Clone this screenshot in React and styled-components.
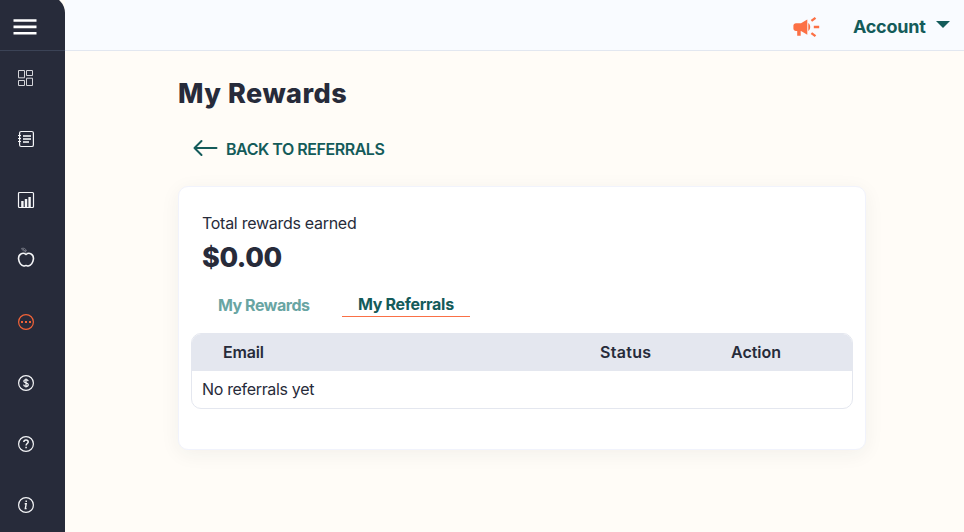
import styled, { createGlobalStyle } from "styled-components";

const GlobalStyle = createGlobalStyle`
  * {
    box-sizing: border-box;
  }

  body {
    margin: 0;
    background: #fffcf7;
    color: #272b3a;
    font-family: Inter, "Liberation Sans", sans-serif;
  }
`;

const Layout = styled.div`
  display: flex;
  height: 532px;
  overflow: hidden;
`;

const Sidebar = styled.nav`
  width: 65px;
  height: 536px;
  margin-top: -4px;
  padding-top: 4px;
  flex-shrink: 0;
  background: #272b3a;
  border-top-right-radius: 17px;
`;

const MenuButton = styled.div`
  height: 51px;
  padding: 18px 0 0 13px;
  border-bottom: 1px solid #3b4356;
`;

const NavItem = styled.div`
  height: 61px;
  padding: ${(props) => props.$top || 17}px 0 0 16px;
  color: ${(props) => (props.$active ? "#f26338" : "#f4f5f7")};

  svg {
    display: block;
  }
`;

const Main = styled.div`
  flex: 1;
`;

const Header = styled.header`
  display: flex;
  height: 51px;
  padding: 0 14px 0 728px;
  background: #f9fbff;
  border-bottom: 1px solid #e2e7f0;
`;

const Megaphone = styled.svg`
  margin-top: 16px;
  flex-shrink: 0;
`;

const Account = styled.div`
  display: flex;
  margin-left: 33px;
  padding-top: 16px;
  color: #145b5a;

  svg {
    margin: 5px 0 0 10px;
  }
`;

const Text = styled.span`
  display: block;
  font-size: ${(props) => props.$size || 16}px;
  font-weight: ${(props) => props.$weight || 400};
  line-height: ${(props) => props.$line || 22}px;
  letter-spacing: ${(props) => props.$spacing || 0}px;
  white-space: nowrap;
`;

const Content = styled.main`
  width: 687px;
  margin: 26px 0 0 113px;
`;

const Title = styled(Text)`
  margin: 0;
`;

const Amount = styled(Text)`
  margin-top: 7px;
`;

const BackLink = styled.a`
  display: flex;
  height: 22px;
  margin-top: 27px;
  padding-left: 15px;
  color: #145b5a;

  svg {
    margin: 1px 8px 0 0;
  }
`;

const Card = styled.section`
  width: 688px;
  height: 264px;
  margin-top: 26px;
  padding: 25px 12px 0 12px;
  background: #fff;
  border: 1px solid #f1f3fc;
  border-radius: 10px;
  box-shadow: 0 4px 20px rgba(39, 43, 58, 0.06);
`;

const Summary = styled.div`
  padding-left: 11px;
`;

const Tabs = styled.div`
  display: flex;
  height: 26px;
  margin-top: 17px;
`;

const Tab = styled.div`
  width: ${(props) => (props.$active ? 128 : 151)}px;
  height: ${(props) => (props.$active ? 25 : 26)}px;
  padding: ${(props) => (props.$active ? "1px 0 0 16px" : "2px 0 0 27px")};
  color: ${(props) => (props.$active ? "#145b5a" : "#69a5a3")};
  border-bottom: ${(props) => (props.$active ? "1px solid #fa7046" : "none")};
`;

const Table = styled.div`
  width: 662px;
  height: 76px;
  margin-top: 15px;
  border: 1px solid #e4e7ef;
  border-radius: 10px;
  overflow: hidden;
`;

const TableHead = styled.div`
  display: grid;
  grid-template-columns: 377px 131px 1fr;
  height: 37px;
  padding: 7px 0 0 31px;
  background: #e4e7ef;
`;

const TableRow = styled.div`
  padding: 7px 0 0 10px;
`;

const MenuIcon = () => (
  <svg width="24" height="18" viewBox="0 0 24 18" fill="#fff">
    <path d="M.5 1.2h23v2.6H.5zM.5 7.6h23v2.6H.5zM.5 14h23v2.6H.5z" />
  </svg>
);

const Icon = ({ children, height = 20 }) => (
  <svg
    width="20"
    height={height}
    viewBox={`0 0 20 ${height}`}
    fill="none"
    stroke="currentColor"
    strokeWidth="1.2"
  >
    {children}
  </svg>
);

const GridIcon = () => (
  <Icon>
    <path
      strokeWidth="1"
      stroke="#d4d5d9"
      d="M2.5 2.5h6v7.3h-6zM10.5 2.5h6v5h-6zM2.5 12.5h6v5h-6zM10.5 10.2h6v7.3h-6z"
    />
  </Icon>
);

const JournalIcon = () => (
  <Icon>
    <path d="M3.6 5V4c0-1 .6-1.5 1.6-1.5h10.5c1.1 0 1.7.6 1.7 1.6v11.8c0 1-.6 1.6-1.7 1.6H5.2c-1 0-1.6-.5-1.6-1.5v-1M3.6 5v10M2 6.5h3M2 9.5h3M2 12.5h3" />
    <path strokeWidth="2" stroke="#c9cbd0" d="M7 7h8M7 10h8M7 13h6" />
  </Icon>
);

const ChartIcon = () => (
  <Icon>
    <rect x="2.5" y="2.5" width="15" height="15" rx="1" />
    <path strokeWidth="2.4" d="M6.4 17v-6M10 17V9M13.6 17V7" />
  </Icon>
);

const AppleIcon = () => (
  <Icon height={24}>
    <path
      strokeWidth="1.6"
      d="M10 8.4C8.6 7.2 6.5 6.9 4.8 8 3 9.1 2.3 10.9 2.6 13.2c.4 3.4 2.6 6.4 5.2 6.8.8.1 1.5-.5 2.2-.5s1.4.6 2.2.5c2.6-.4 4.8-3.4 5.2-6.8.3-2.3-.4-4.1-2.2-5.2-1.7-1.1-3.8-.8-5.2.4Z"
    />
    <path
      stroke="#858893"
      strokeWidth=".8"
      d="M10.2 7.5C9.9 5.4 8.6 4 7 3M5.6 2.4c2.3-.7 4.4.4 4.8 2.6-2.4.4-4.3-.4-4.8-2.6Z"
    />
  </Icon>
);

const DotsIcon = () => (
  <Icon>
    <circle cx="10" cy="10" r="7.4" />
    <path
      fill="currentColor"
      stroke="none"
      d="M5 9h2v2H5zM9 9h2v2H9zM13 9h2v2h-2z"
    />
  </Icon>
);

const DollarIcon = () => (
  <Icon>
    <circle cx="10" cy="10" r="7.4" />
    <path d="M12.2 8.2c-.2-1-1-1.5-2.2-1.5-1.3 0-2.2.6-2.2 1.6 0 2.2 4.5 1.1 4.5 3.4 0 1-1 1.7-2.3 1.7s-2.2-.6-2.4-1.7M10 5.6v8.8" />
  </Icon>
);

const HelpIcon = () => (
  <Icon>
    <circle cx="10" cy="10" r="7.4" />
    <path
      strokeWidth="1.5"
      d="M7.8 8c.1-1.3 1-2 2.2-2s2.2.7 2.2 1.9c0 1.5-2.1 1.7-2.1 3.5M10.1 12.8v1.5"
    />
  </Icon>
);

const InfoIcon = () => (
  <Icon>
    <circle cx="10" cy="10" r="7.4" />
    <path strokeWidth="1.4" d="M8.7 8.8h1.5l-.9 4.8h1.3M10.2 5.5v1.5" />
  </Icon>
);

const navItems = [
  { icon: <GridIcon /> },
  { icon: <JournalIcon /> },
  { icon: <ChartIcon /> },
  { icon: <AppleIcon />, top: 12 },
  { icon: <DotsIcon />, active: true },
  { icon: <DollarIcon /> },
  { icon: <HelpIcon /> },
  { icon: <InfoIcon /> },
];

const App = () => {
  return (
    <>
      <GlobalStyle />
      <Layout>
        <Sidebar>
          <MenuButton>
            <MenuIcon />
          </MenuButton>
          {navItems.map((item, i) => (
            <NavItem key={i} $top={item.top} $active={item.active}>
              {item.icon}
            </NavItem>
          ))}
        </Sidebar>

        <Main>
          <Header>
            <Megaphone width="27" height="22" viewBox="0 0 27 22">
              <path
                fill="#fc7045"
                d="M3 7.2h5L14.3 3.5v15.2L8 15H7.7v4.8H4.2V15H3c-1.5 0-2.6-1-2.6-2.4v-3C.4 8.2 1.5 7.2 3 7.2ZM15.3 7c1.2.9 1.9 2.3 1.9 4s-.7 3.1-1.9 4Z"
              />
              <path
                stroke="#fc7045"
                strokeWidth="2.4"
                d="M18.4 4.9 22.5 1.9M20.8 11h5.4M18.4 17.1l4.1 3"
              />
            </Megaphone>
            <Account>
              <Text $size={18} $weight={700} $spacing={-0.25}>
                Account
              </Text>
              <svg width="14" height="7" viewBox="0 0 14 7">
                <path fill="#145b5a" d="M0 0h14L7 7z" />
              </svg>
            </Account>
          </Header>

          <Content>
            <Title as="h1" $size={27} $weight={800} $line={34} $spacing={0.5}>
              My Rewards
            </Title>
            <BackLink>
              <svg
                width="25"
                height="18"
                viewBox="0 0 25 18"
                fill="none"
                stroke="#145b5a"
                strokeWidth="2"
                strokeLinecap="round"
                strokeLinejoin="round"
              >
                <path d="M8.5 2 1.5 9l7 7M1.5 9h22" />
              </svg>
              <Text $weight={600} $spacing={-0.46}>
                BACK TO REFERRALS
              </Text>
            </BackLink>

            <Card>
              <Summary>
                <Text $spacing={-0.28}>Total rewards earned</Text>
                <Amount $size={27} $weight={800} $line={34} $spacing={-0.4}>
                  $0.00
                </Amount>
              </Summary>
              <Tabs>
                <Tab>
                  <Text $weight={700} $spacing={-0.46}>
                    My Rewards
                  </Text>
                </Tab>
                <Tab $active>
                  <Text $weight={700} $spacing={-0.3}>
                    My Referrals
                  </Text>
                </Tab>
              </Tabs>
              <Table>
                <TableHead>
                  <Text $weight={600} $spacing={-0.2}>
                    Email
                  </Text>
                  <Text $weight={600} $spacing={0.3}>
                    Status
                  </Text>
                  <Text $weight={600}>Action</Text>
                </TableHead>
                <TableRow>
                  <Text $spacing={-0.33}>No referrals yet</Text>
                </TableRow>
              </Table>
            </Card>
          </Content>
        </Main>
      </Layout>
    </>
  );
};

export default App;
